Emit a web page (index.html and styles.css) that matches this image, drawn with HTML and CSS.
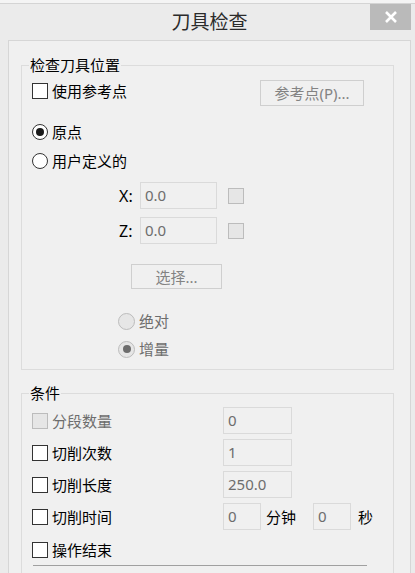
FILE: index.html
```html
<!DOCTYPE html>
<html lang="zh-CN">
<head>
  <meta charset="UTF-8" />
  <meta name="viewport" content="width=device-width, initial-scale=1.0"/>
  <title>刀具检查</title>
  <link rel="stylesheet" href="styles.css">
</head>
<body>

  <div class="window">
    <div class="titlebar">
      <span class="title">刀具检查</span>
      <button class="close" type="button" aria-label="关闭">
        <svg width="14" height="12" viewBox="0 0 14 12">
          <path d="M2 1 L12 11 M12 1 L2 11" stroke="#fff" stroke-width="2.6" fill="none"/>
        </svg>
      </button>
    </div>

    <div class="panel">
      <fieldset class="group group-pos">
        <legend>检查刀具位置</legend>

        <div class="row row-ref">
          <label class="opt"><input type="checkbox" /> 使用参考点</label>
          <button class="btn btn-ref" type="button" disabled>参考点(P)...</button>
        </div>

        <label class="opt opt-origin"><input type="radio" name="pos" checked /> 原点</label>
        <label class="opt opt-user"><input type="radio" name="pos" /> 用户定义的</label>

        <div class="coord coord-x">
          <span class="coord-label">X:</span>
          <input class="field field-coord" type="text" value="0.0" disabled />
          <span class="mini-box"></span>
        </div>
        <div class="coord coord-z">
          <span class="coord-label">Z:</span>
          <input class="field field-coord" type="text" value="0.0" disabled />
          <span class="mini-box"></span>
        </div>

        <button class="btn btn-select" type="button" disabled>选择...</button>

        <label class="opt opt-sub opt-abs disabled"><input type="radio" name="mode" disabled /> 绝对</label>
        <label class="opt opt-sub opt-inc disabled"><input type="radio" name="mode" checked disabled /> 增量</label>
      </fieldset>

      <fieldset class="group group-cond">
        <legend>条件</legend>

        <div class="cond">
          <label class="opt disabled"><input type="checkbox" disabled /> 分段数量</label>
          <input class="field field-num" type="text" value="0" disabled />
        </div>
        <div class="cond">
          <label class="opt"><input type="checkbox" /> 切削次数</label>
          <input class="field field-num" type="text" value="1" disabled />
        </div>
        <div class="cond">
          <label class="opt"><input type="checkbox" /> 切削长度</label>
          <input class="field field-num" type="text" value="250.0" disabled />
        </div>
        <div class="cond">
          <label class="opt"><input type="checkbox" /> 切削时间</label>
          <div class="time">
            <input class="field field-time" type="text" value="0" disabled />
            <span class="unit unit-min">分钟</span>
            <input class="field field-time" type="text" value="0" disabled />
            <span class="unit">秒</span>
          </div>
        </div>
        <label class="opt opt-end"><input type="checkbox" /> 操作结束</label>

        <hr class="divider" />
      </fieldset>
    </div>
  </div>

</body>
</html>
```

FILE: styles.css
```css
* {
  box-sizing: border-box;
}

html, body {
  margin: 0;
  height: 100%;
  overflow: hidden;
}

body {
  font-family: 'Noto Sans', 'Noto Sans CJK SC', sans-serif;
  font-size: 15px;
  color: #000;
  background-color: #f4f4f4;
}

.window {
  margin-top: 3px;
  border-top: 1px solid #d4d4d4;
  background-color: #ebebeb;
  padding: 0 4px 0 8px;
  height: calc(100% - 3px);
  display: flex;
  flex-direction: column;
}

.titlebar {
  position: relative;
  height: 36px;
  flex: none;
  display: flex;
  align-items: center;
  justify-content: center;
  padding-bottom: 2px;
}

.title {
  font-family: 'Noto Sans CJK SC', sans-serif;
  font-size: 19px;
  line-height: 24px;
  color: #2b2b2b;
}

.close {
  position: absolute;
  top: 0;
  right: 0;
  width: 41px;
  height: 26px;
  border: none;
  padding: 0;
  background-color: #bababa;
  display: flex;
  align-items: center;
  justify-content: center;
}

.panel {
  flex: 1;
  min-height: 0;
  overflow: hidden;
  border: 1px solid #d6d6d6;
  border-bottom: none;
  background-color: #f0f0f0;
  padding: 14px 16px 0 12px;
}

.group {
  margin: 0;
  min-width: 0;
  border: 1px solid #dcdcdc;
  padding: 0 29px 10px 10px;
  display: flex;
  flex-direction: column;
  align-items: flex-start;
}

.group legend {
  padding: 0 1px;
  margin-left: -3px;
  line-height: 20px;
  font-family: 'Noto Sans CJK SC', sans-serif;
}

.opt {
  display: flex;
  align-items: center;
  gap: 4px;
  height: 20px;
  line-height: 20px;
  font-family: 'Noto Sans CJK SC', sans-serif;
  white-space: nowrap;
}

.opt.disabled {
  color: #6d6d6d;
}

.opt input {
  appearance: none;
  margin: 0;
  width: 16px;
  height: 16px;
  border: 1px solid #333;
  background-color: #fff;
  flex: none;
}

.opt input[type="radio"] {
  border-radius: 50%;
  display: flex;
  align-items: center;
  justify-content: center;
}

.opt input[type="radio"]:checked::after {
  content: "";
  width: 8px;
  height: 8px;
  border-radius: 50%;
  background-color: #1a1a1a;
}

.opt input:disabled {
  border-color: #bcbcbc;
  background-color: #e6e6e6;
}

.opt input[type="radio"]:disabled:checked::after {
  background-color: #6d6d6d;
}

.row-ref {
  margin-top: 5px;
  width: 100%;
  display: flex;
  align-items: flex-start;
}

.row-ref .opt {
  margin-top: 1px;
}

.btn {
  font-family: 'Noto Sans', 'Noto Sans CJK SC', sans-serif;
  font-size: 15px;
  background-color: #f0f0f0;
  border: 1px solid #cfcfcf;
  color: #838383;
  padding: 0;
  height: 26px;
  line-height: 22px;
}

.btn-ref {
  margin-left: auto;
  width: 104px;
}

.opt-origin {
  margin-top: 16px;
}

.opt-user {
  margin-top: 9px;
}

.coord {
  display: flex;
  align-items: center;
  margin-left: 87px;
}

.coord-x {
  margin-top: 11px;
}

.coord-z {
  margin-top: 8px;
}

.coord-label {
  width: 21px;
  font-size: 16px;
}

.field {
  font-family: 'Noto Sans', 'Noto Sans CJK SC', sans-serif;
  font-size: 15px;
  color: #6d6d6d;
  background-color: #f0f0f0;
  border: 1px solid #dadada;
  height: 27px;
  padding: 0 0 2px 4px;
  margin: 0;
  flex: none;
}

.field-coord {
  width: 77px;
}

.mini-box {
  width: 16px;
  height: 16px;
  margin-left: 11px;
  border: 1px solid #bcbcbc;
  background-color: #e6e6e6;
}

.btn-select {
  margin-top: 20px;
  margin-left: 99px;
  width: 91px;
  height: 25px;
}

.opt-sub {
  margin-left: 86px;
}

.opt-sub input {
  width: 17px;
  height: 17px;
}

.opt-abs {
  margin-top: 22px;
}

.opt-inc {
  margin-top: 8px;
}

.group-cond {
  margin-top: 13px;
  padding-right: 10px;
  padding-bottom: 20px;
}

.cond {
  display: grid;
  grid-template-columns: 191px max-content;
  align-items: center;
  margin-top: 5px;
}

.cond:first-of-type {
  margin-top: 4px;
}

.field-num {
  width: 69px;
}

.time {
  display: flex;
  align-items: center;
  white-space: nowrap;
}

.field-time {
  width: 38px;
}

.unit {
  font-family: 'Noto Sans CJK SC', sans-serif;
  line-height: 20px;
  margin-left: 7px;
}

.unit-min {
  margin-left: 5px;
  margin-right: 17px;
}

.opt-end {
  margin-top: 10px;
}

.divider {
  align-self: stretch;
  margin: 5px 16px 0 1px;
  border: none;
  border-top: 1px solid #a0a0a0;
}
```
